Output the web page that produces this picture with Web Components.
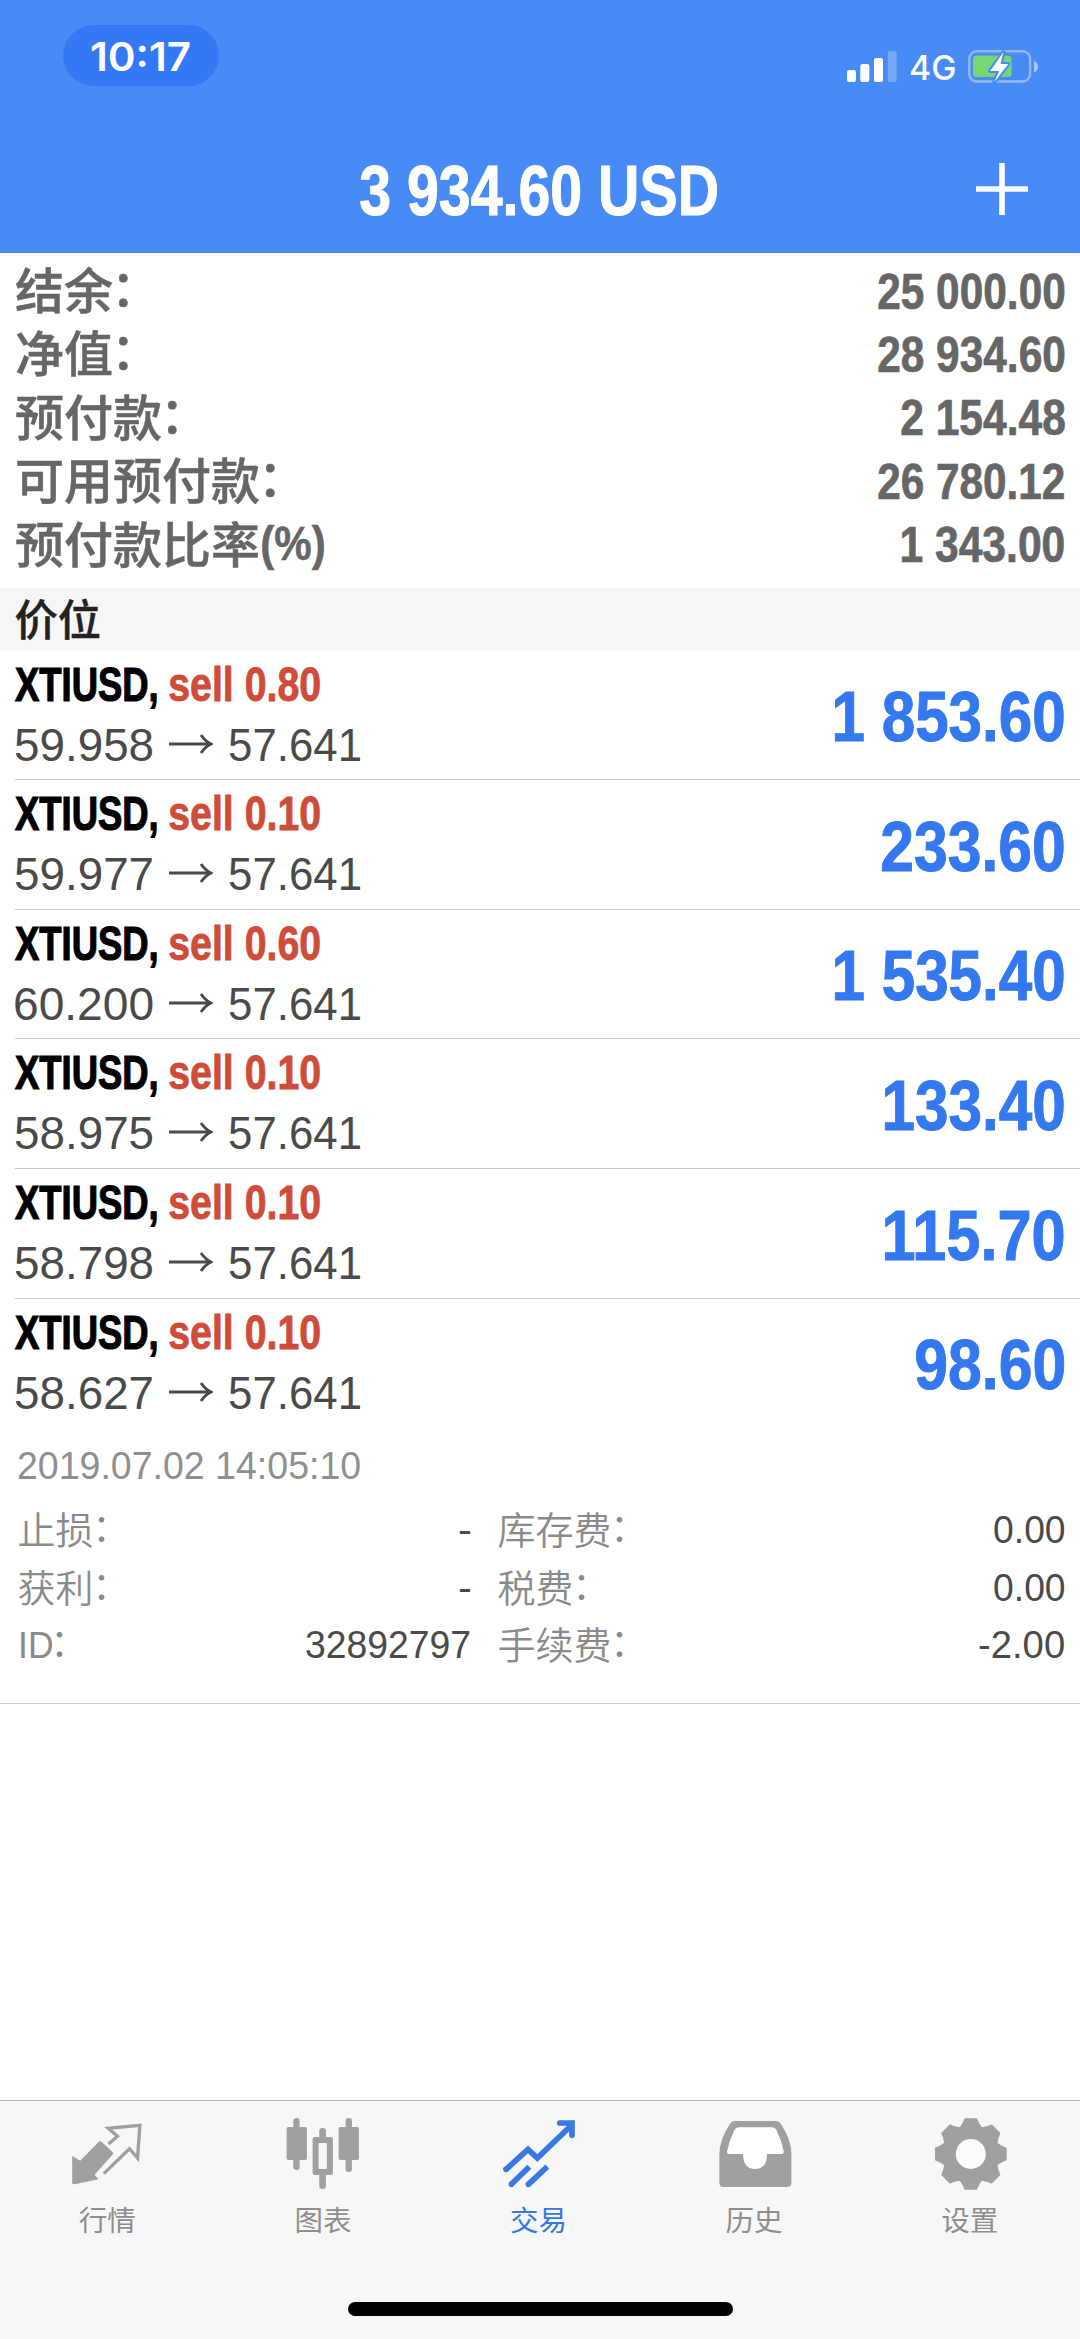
<!DOCTYPE html>
<html lang="zh-CN">
<head>
<meta charset="utf-8">
<meta name="viewport" content="width=device-width">
<title>Trade</title>
<style>
  html, body { margin: 0; padding: 0; background: #fff; }
  body { width: 1080px; height: 2339px; overflow: hidden; }
</style>
</head>
<body>
<trade-app></trade-app>
<script>
const SANS = '"Liberation Sans", "Noto Sans CJK SC", sans-serif';
const NARROW = '"Liberation Sans Narrow", "Liberation Sans", sans-serif';
const CJK = '"Noto Sans CJK SC", sans-serif';
const COLON_CSS = 'b { display: inline-block; font-weight: inherit; transform: translate(-.04em, -.07em); }';
const colon = s => s.replace('：', '<b>：</b>');

function define(name, render, after) {
  customElements.define(name, class extends HTMLElement {
    connectedCallback() {
      if (this.shadowRoot) return;
      this.attachShadow({ mode: 'open' }).innerHTML = render(this);
      if (after) after(this);
    }
  });
}

/* Text whose ink is set to an exact width (attribute w). */
const ctx = document.createElement('canvas').getContext('2d');
define('fit-text', () => `<style>
    :host { display: block; flex: none; }
    span { display: block; width: max-content; white-space: pre; transform-origin: 0 0; }
  </style><span><slot></slot></span>`,
  el => {
    const cs = getComputedStyle(el);
    ctx.font = `${cs.fontWeight} ${cs.fontSize} ${cs.fontFamily}`;
    const m = ctx.measureText(el.textContent);
    const w = parseFloat(el.getAttribute('w'));
    const s = w / (m.actualBoundingBoxLeft + m.actualBoundingBoxRight);
    el.style.width = w + 'px';
    el.shadowRoot.querySelector('span').style.transform =
      `translateX(${m.actualBoundingBoxLeft * s}px) scaleX(${s})`;
  });

define('status-bar', () => `
  <style>
    :host { display: flex; justify-content: space-between; height: 126px; padding: 25px 41px 0 63px; color: #fff; box-sizing: border-box; }
    .time { width: 156px; height: 61px; border-radius: 30.5px; background: #3478f6; display: flex; justify-content: center;
      font: 600 40px/61px Inter, sans-serif; }
    .time fit-text { margin-right: 1px; padding-top: .5px; }
    .right { display: flex; height: 34px; margin-top: 25px; }
    .net { font: 500 34px/34px Inter, sans-serif; margin: 1px 13px 0 13px; }
  </style>
  <div class="time"><fit-text w="99">10:17</fit-text></div>
  <div class="right">
    <svg width="50" height="34" viewBox="0 0 50 34" fill="#fff"><rect x="0" y="20" width="9" height="12" rx="2"/><rect x="13.3" y="14" width="9" height="18" rx="2"/><rect x="27" y="8" width="9" height="24" rx="2"/><rect x="40.7" y="1" width="9" height="31" rx="2" opacity=".25"/></svg>
    <fit-text class="net" w="45">4G</fit-text>
    <svg width="71" height="34" viewBox="0 0 71 34"><rect x="1.3" y="1.3" width="60.8" height="30.2" rx="7.5" fill="none" stroke="#fff" stroke-opacity=".4" stroke-width="2.4"/><path d="M66 10.5q4 2 4 6t-4 6z" fill="#fff" opacity=".5"/><rect x="5" y="5.5" width="38.5" height="21.5" rx="3.5" fill="#76d672"/><path d="M35.3 2.3L22.2 20.9h8.9l-4.7 11L40.4 14h-7.8z" fill="#fff" stroke="#488bf7" stroke-width="4" stroke-linejoin="round" paint-order="stroke"/></svg>
  </div>`);

define('title-bar', () => `
  <style>
    :host { display: grid; grid-template-columns: 1fr auto 1fr; height: 127px; color: #fff; }
    fit-text { font: 700 70px/127px ${NARROW}; -webkit-text-stroke: 1px #fff; padding-top: 2px; margin-right: 2.5px; }
    svg { justify-self: end; margin: 37px 52px 0 0; }
  </style>
  <span></span><fit-text w="357">3 934.60 USD</fit-text>
  <svg width="52" height="52" viewBox="0 0 52 52"><path d="M26 0v52M0 26h52" stroke="#fff" stroke-width="5.6"/></svg>`);

define('summary-row', el => `
  <style>
    :host { display: flex; justify-content: space-between; height: 63.4px; padding: 0 16px 0 15px; color: #666; }
    .label { display: flex; font: 500 49px/63.4px ${CJK}; -webkit-text-stroke: .5px #666; }
    .pct { font: 700 48px/63.4px ${NARROW}; margin: 2px 0 0 1.5px; }
    .value { font: 700 49.5px/63.4px ${NARROW}; padding-top: 3.6px; -webkit-text-stroke: .7px #666; }
    ${COLON_CSS}
  </style>
  <span class="label">${colon(el.getAttribute('label'))}${el.hasAttribute('unit') ? `<fit-text class="pct" w="62">${el.getAttribute('unit')}</fit-text>` : ''}</span>
  <fit-text class="value" w="${el.getAttribute('w')}">${el.getAttribute('value')}</fit-text>`);

define('section-head', () => `
  <style>
    :host { display: block; height: 63px; background: #f6f6f6; color: #222; padding-left: 14.5px; font: 500 43.3px/59px ${CJK}; box-sizing: border-box; -webkit-text-stroke: .4px #222; }
  </style><slot></slot>`);

define('trade-item', el => `
  <style>
    :host { display: flex; justify-content: space-between; height: 129.6px; box-sizing: border-box; margin-left: 15px; padding-right: 16px; border-bottom: 1.5px solid #c9c9cb; }
    :host([last]) { border-bottom-color: transparent; }
    .left { padding-top: 4px; }
    .row { display: flex; height: 60px; }
    .sym, .side { font: 700 47.5px/60px ${NARROW}; }
    .sym { color: #000; margin-right: 12px; -webkit-text-stroke: 1.2px #000; }
    .side { color: #cf4b3a; -webkit-text-stroke: .8px #cf4b3a; }
    .price { font: 400 46px/60px ${SANS}; color: #4a4a4a; }
    .arrow { display: block; margin: 19px 16px 0; }
    .profit { font: 700 70px/129px ${NARROW}; color: #3478f0; -webkit-text-stroke: 1px #3478f0; padding-top: 2.5px; }
  </style>
  <div class="left">
    <div class="row"><fit-text class="sym" w="142">XTIUSD,</fit-text><fit-text class="side" w="151">sell ${el.getAttribute('lots')}</fit-text></div>
    <div class="row"><fit-text class="price" w="137.5">${el.getAttribute('open')}</fit-text><svg class="arrow" role="img" aria-label="→" width="44" height="20" viewBox="0 0 44 20" fill="none" stroke="#4a4a4a" stroke-width="2.9"><path d="M0 10h42M32 1q4 6 10 9-6 3-10 9"/></svg><fit-text class="price" w="131.5">57.641</fit-text></div>
  </div>
  <fit-text class="profit" w="${el.getAttribute('w')}">${el.getAttribute('profit')}</fit-text>`);

define('detail-row', el => {
  const a = n => el.getAttribute(n);
  return `
  <style>
    :host { display: grid; grid-template-columns: 452px 1fr; column-gap: 28px; height: 57.6px; padding: 0 16px 0 17.5px; font: 400 38px/57.6px ${SANS}; }
    div { display: flex; justify-content: space-between; }
    .label { font: 350 38px/52px ${CJK}; color: #8a8a8a; display: flex; }
    .id { font: 400 37px/57.6px ${SANS}; margin-left: 3px; }
    .value { color: #4a4a4a; }
    ${COLON_CSS}
  </style>
  <div><span class="label">${a('l1') === 'ID：' ? '<fit-text class="id" w="31">ID</fit-text><b>：</b>' : colon(a('l1'))}</span><fit-text class="value" w="${a('w1')}">${a('v1')}</fit-text></div>
  <div><span class="label">${colon(a('l2'))}</span><fit-text class="value" w="${a('w2')}">${a('v2')}</fit-text></div>`;
});

define('trade-details', () => `
  <style>
    :host { display: block; height: 275.4px; box-sizing: border-box; padding-top: 8px; border-bottom: 1.5px solid #cfcfcf; }
    .date { font: 400 38px/60px ${SANS}; color: #8f8f8f; margin-left: 18px; height: 66px; }
  </style>
  <fit-text class="date" w="342">2019.07.02 14:05:10</fit-text>
  <detail-row l1="止损：" v1="-" w1="11" l2="库存费：" v2="0.00" w2="70.5"></detail-row>
  <detail-row l1="获利：" v1="-" w1="11" l2="税费：" v2="0.00" w2="70.5"></detail-row>
  <detail-row l1="ID：" v1="32892797" w1="164" l2="手续费：" v2="-2.00" w2="85"></detail-row>`);

define('tab-item', el => `
  <style>
    :host { flex: 1; display: flex; flex-direction: column; align-items: center; padding-top: 14.5px; color: #8e8e8e; --ink: #a0a0a0; }
    :host([active]) { color: #3478e0; --ink: #3a78e3; }
    span { font: 400 28.5px/42px ${CJK}; margin: 3px 1px 0 0; }
    ::slotted(svg) { display: block; width: 80px; height: 80px; }
  </style>
  <slot></slot><span>${el.getAttribute('label')}</span>`);

define('tab-bar', () => {
  const teeth = [0, 45, 90, 135, 180, 225, 270, 315].map(a =>
    `<path d="M-17-105H17Q25-84 34-76H-34Q-25-84-17-105z" transform="rotate(${a})"/>`).join('');
  return `
  <style>
    :host { display: flex; height: 239.5px; box-sizing: border-box; background: #f7f7f7; border-top: 1.3px solid #b0b0b0; padding-right: 2px; }
  </style>
  <tab-item label="行情"><svg viewBox="83.4 75 240 240"><path d="M176 155q5-3 9 1l32 30q4 4 0 8l-54 60 12 14-68 14q-8 2-11-2v-82l24 14z" fill="var(--ink)"/><path d="M205 162l27-23-28-24 95-9-7 98-24-28-77 75" fill="none" stroke="var(--ink)" stroke-width="10"/></svg></tab-item>
  <tab-item label="图表"><svg viewBox="730.2 75 240 240" fill="var(--ink)"><rect x="761" y="84" width="19" height="156" rx="9"/><rect x="741" y="111" width="61" height="99" rx="5"/><rect x="839" y="114" width="20" height="45" rx="9"/><rect x="839" y="240" width="20" height="57" rx="9"/><path fill-rule="evenodd" d="M825 141h49q6 0 6 6v102q0 6-6 6h-49q-6 0-6-6V147q0-6 6-6zm16 18q-4 0-4 4v70q0 4 4 4h17q4 0 4-4v-70q0-4-4-4z"/><rect x="918" y="84" width="19" height="162" rx="9"/><rect x="897" y="111" width="61" height="99" rx="5"/></svg></tab-item>
  <tab-item label="交易" active><svg viewBox="117 75 240 240" fill="none" stroke="var(--ink)" stroke-width="17"><path d="M135 241l69-63 28 26 100-96" stroke-linejoin="miter"/><path d="M299 99h37v37" stroke-linecap="round"/><path d="M138 238h.1M154 283h.1M205 283h.1" stroke-linecap="round"/><path d="M154 283l54-53M205 283l57-53"/></svg></tab-item>
  <tab-item label="历史"><svg viewBox="763.8 75 240 240"><path fill="var(--ink)" d="M824 93h122q10 0 16 10 32 48 31 92v83q0 13-13 13H790q-13 0-13-13v-83q-1-44 31-92 6-10 16-10z"/><path fill="#fff" d="M838 112h94q12 0 17 10 14 28 21 62 1 8-7 8h-43q0 45-36 45t-36-45h-42q-7 0-6-8 7-34 21-62 5-10 17-10z"/></svg></tab-item>
  <tab-item label="设置"><svg viewBox="510.6 75 240 240"><g transform="translate(633 192)" fill="var(--ink)" stroke="var(--ink)" stroke-width="5" stroke-linejoin="round">${teeth}<circle r="80"/></g><circle cx="633" cy="192" r="45" fill="#fbfbfb"/></svg></tab-item>`;
});

define('trade-app', () => `
  <style>
    :host { display: flex; flex-direction: column; width: 1080px; height: 2339px; background: #fff; }
    header { background: #488bf7; height: 253px; }
    .summary { height: 334.7px; padding-top: 3px; box-sizing: border-box; }
    main { flex: 1; }
    footer { position: relative; }
    i { position: absolute; left: 347.5px; top: 202px; width: 385.5px; height: 14px; border-radius: 7px; background: #000; }
  </style>
  <header><status-bar></status-bar><title-bar></title-bar></header>
  <main>
    <div class="summary">
      <summary-row label="结余：" value="25 000.00" w="186.5"></summary-row>
      <summary-row label="净值：" value="28 934.60" w="186.5"></summary-row>
      <summary-row label="预付款：" value="2 154.48" w="163.5"></summary-row>
      <summary-row label="可用预付款：" value="26 780.12" w="186"></summary-row>
      <summary-row label="预付款比率" unit="(%)" value="1 343.00" w="162"></summary-row>
    </div>
    <section-head>价位</section-head>
    <trade-item lots="0.80" open="59.958" profit="1 853.60" w="229"></trade-item>
    <trade-item lots="0.10" open="59.977" profit="233.60" w="182"></trade-item>
    <trade-item lots="0.60" open="60.200" profit="1 535.40" w="229"></trade-item>
    <trade-item lots="0.10" open="58.975" profit="133.40" w="179"></trade-item>
    <trade-item lots="0.10" open="58.798" profit="115.70" w="179"></trade-item>
    <trade-item lots="0.10" open="58.627" profit="98.60" w="148.5" last></trade-item>
    <trade-details></trade-details>
  </main>
  <footer><tab-bar></tab-bar><i></i></footer>`);
</script>
</body>
</html>
